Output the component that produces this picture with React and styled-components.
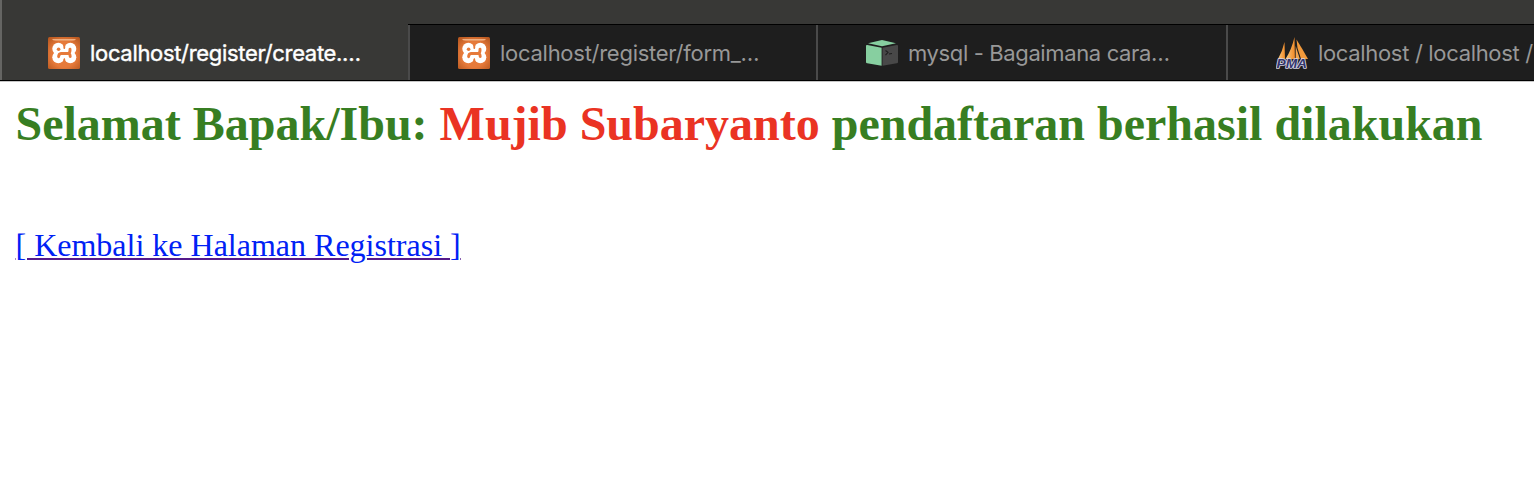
import React from "react";
import styled, { createGlobalStyle } from "styled-components";

const GlobalStyle = createGlobalStyle`
  *, *::before, *::after { box-sizing: border-box; }
  html, body { margin: 0; background: #fff; }
  body { overflow: hidden; }
`;

const Browser = styled.div`
  display: flex;
  flex-direction: column;
  width: 1534px;
  height: 480px;
  overflow: hidden;
  background: #fff;
`;

const TabBar = styled.nav`
  display: flex;
  flex: none;
  align-items: flex-end;
  height: 82px;
  background: #383836;
  border-bottom: 1px solid #c6c6c6;
`;

const Tab = styled.div`
  display: flex;
  flex: none;
  align-items: center;
  gap: 10px;
  width: ${(p) => p.$width}px;
  height: ${(p) => (p.$active ? 81 : 57)}px;
  padding: ${(p) => (p.$active ? "25px 0 0 46px" : "1px 0 0 48px")};
  background: ${(p) => (p.$active ? "#383836" : "#1e1e1e")};
  color: ${(p) => (p.$active ? "#fff" : "#989898")};
  border-left: 2px solid ${(p) => (p.$active ? "#656563" : "#4a4a4a")};
  border-image: linear-gradient(
      to bottom,
      ${(p) => (p.$active ? "#656563 0" : "#000 1px, #4a4a4a 1px")},
      ${(p) => (p.$active ? "#656563" : "#4a4a4a")} calc(100% - 1px),
      #000 calc(100% - 1px)
    ) 0 0 0 2;
  box-shadow: inset 0 -1px #000${(p) => (p.$active ? "" : ", inset 0 1px #000")};
`;

const TabTitle = styled.span`
  font: 400 22px/28px Inter, "Liberation Sans", sans-serif;
  letter-spacing: ${(p) => p.$tracking}px;
  white-space: nowrap;
  -webkit-text-stroke: ${(p) => (p.$active ? "0.4px #fff" : "0")};
`;

const Icon = styled.svg`
  display: block;
  flex: none;
  width: 32px;
  height: 32px;
`;

const Page = styled.main`
  padding: 14px 15.5px;
  font-family: "Liberation Serif", "Times New Roman", serif;
`;

const Heading = styled.h1`
  margin: 0;
  color: #377e22;
  font-size: 48px;
  line-height: 55px;
  font-weight: 700;
  white-space: nowrap;
`;

const Name = styled.span`
  color: #ea3323;
`;

const BackLink = styled.a`
  display: inline-block;
  margin-top: 76px;
  color: #551a8b;
  font-size: 32px;
  line-height: 37px;
  white-space: nowrap;
  text-decoration: underline;
  text-decoration-thickness: 2px;
  text-underline-offset: 2px;
`;

const LinkText = styled.span`
  color: #0021f5;
`;

function XamppIcon() {
  return (
    <Icon viewBox="0 0 32 32">
      <defs>
        <radialGradient id="xamppFill" cx=".5" cy=".55" r=".72">
          <stop offset=".55" stopColor="#e67a3a" />
          <stop offset="1" stopColor="#b3541d" />
        </radialGradient>
        <linearGradient id="xamppShine" x1="0" y1="0" x2="0" y2="1">
          <stop offset="0" stopColor="#f4bd93" />
          <stop offset="1" stopColor="#e58a50" />
        </linearGradient>
      </defs>
      <rect width="32" height="32" rx="1.5" fill="url(#xamppFill)" />
      <path d="M4 2h24q-1 2-4 2H8Q5 4 4 2Z" fill="url(#xamppShine)" />
      <g fill="#fff">
        <circle cx="10.300" cy="11.800" r="6" />
        <circle cx="22.300" cy="11.800" r="6" />
        <circle cx="10.300" cy="20.300" r="6" />
        <circle cx="22.300" cy="20.300" r="6" />
        <rect x="6.500" y="13" width="19.500" height="7" />
        <path d="M12 12h9v9h-9Z" />
      </g>
      <circle cx="10.600" cy="12.200" r="1.800" fill="#e67a3a" />
      <path
        d="M10.600 19.700Q10.800 16.700 13 16.500H20.500Q22 16.600 22.200 19.500M20.500 16.500Q22.300 15.500 22 12.200"
        fill="none"
        stroke="#e67a3a"
        strokeWidth="2.900"
        strokeLinecap="round"
        strokeLinejoin="round"
      />
      <path d="M16.300 7.500v3.500M16.300 22.500V25" stroke="#e67a3a" strokeWidth="1.800" strokeLinecap="round" />
    </Icon>
  );
}

function CubeIcon() {
  return (
    <Icon viewBox="0 0 32 32">
      <path d="M2 6.200 16 3l14 3.200-14 3Z" fill="#87cfa0" />
      <path d="M0 9q0-1.300 1.300-1L15.600 10.800V28.800L1.200 26.300Q0 26 0 24.900Z" fill="#87cfa0" />
      <path d="M16.500 10.800 30.800 8q1.200-.2 1.200 1v15.900q0 1.100-1.200 1.400L16.500 28.800Z" fill="#484848" />
      <path d="m19.500 13.500 2.500 1.800-2.500 2.800M23 17l3-.5" fill="none" stroke="#1e1e1e" strokeWidth="1.100" />
    </Icon>
  );
}

const PmaText = styled.text`
  font: italic 700 12.5px "Liberation Sans", sans-serif;
  fill: #34366c;
  stroke: #d6d6e4;
  stroke-width: 1.6px;
  stroke-linejoin: round;
  paint-order: stroke;
`;

function PmaIcon() {
  return (
    <Icon viewBox="0 0 32 32">
      <defs>
        <linearGradient id="pmaSail" x1="0" y1="0" x2="1" y2="0">
          <stop offset="0" stopColor="#f8ca82" />
          <stop offset="1" stopColor="#f28a26" />
        </linearGradient>
      </defs>
      <path d="M8.500 5Q6.500 14 2 22h7Z" fill="url(#pmaSail)" />
      <path d="M18.500 0Q15.500 13 9.500 22h9.400Z" fill="url(#pmaSail)" />
      <path d="M20.500 2.500Q26.500 12 32 22H25l-3.500-11Z" fill="#f29a3c" />
      <path d="M19.700 9 23.800 22h-4.100Z" fill="#f4a650" />
      <PmaText x="0.500" y="30.500" textLength="30.500" lengthAdjust="spacingAndGlyphs">PMA</PmaText>
    </Icon>
  );
}

const tabs = [
  { title: "localhost/register/create.…", icon: XamppIcon, width: 408, tracking: -0.32, active: true },
  { title: "localhost/register/form_…", icon: XamppIcon, width: 408, tracking: -0.27 },
  { title: "mysql - Bagaimana cara…", icon: CubeIcon, width: 410, tracking: -0.37 },
  { title: "localhost / localhost /", icon: PmaIcon, width: 308, tracking: -0.33 },
];

export default function App() {
  return (
    <Browser>
      <GlobalStyle />
      <TabBar>
        {tabs.map(({ title, icon: Glyph, width, tracking, active }) => (
          <Tab key={title} $width={width} $active={active}>
            <Glyph />
            <TabTitle $active={active} $tracking={tracking}>{title}</TabTitle>
          </Tab>
        ))}
      </TabBar>
      <Page>
        <Heading>
          Selamat Bapak/Ibu: <Name>Mujib Subaryanto</Name> pendaftaran berhasil dilakukan
        </Heading>
        <BackLink href="#">
          <LinkText>[ Kembali ke Halaman Registrasi ]</LinkText>
        </BackLink>
      </Page>
    </Browser>
  );
}
